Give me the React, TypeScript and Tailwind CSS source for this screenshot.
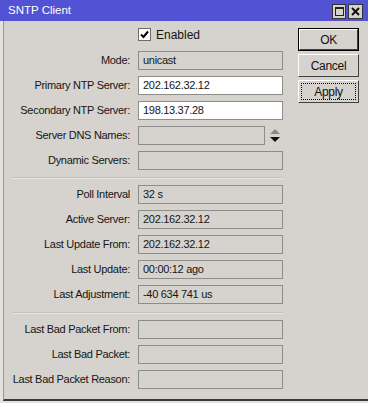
import React from 'react';

const font = { fontFamily: '"Liberation Sans", Arial, sans-serif' };

type Row = { label: string; value?: string; white?: boolean; spin?: boolean };

const topRows: Row[] = [
  { label: 'Mode:', value: 'unicast' },
  { label: 'Primary NTP Server:', value: '202.162.32.12', white: true },
  { label: 'Secondary NTP Server:', value: '198.13.37.28', white: true },
  { label: 'Server DNS Names:', spin: true },
  { label: 'Dynamic Servers:' },
];

const statusRows: Row[] = [
  { label: 'Poll Interval', value: '32 s' },
  { label: 'Active Server:', value: '202.162.32.12' },
  { label: 'Last Update From:', value: '202.162.32.12' },
  { label: 'Last Update:', value: '00:00:12 ago' },
  { label: 'Last Adjustment:', value: '-40 634 741 us' },
];

const badRows: Row[] = [
  { label: 'Last Bad Packet From:' },
  { label: 'Last Bad Packet:' },
  { label: 'Last Bad Packet Reason:' },
];

const Field: React.FC<{ row: Row }> = ({ row }) => (
  <div className="flex items-center h-[19px]">
    <div className="w-[131px] pr-[1px] text-right whitespace-nowrap">{row.label}</div>
    <div
      className={`ml-[7px] h-[19px] border border-[#8e8c88] pl-[4px] flex items-center whitespace-nowrap ${
        row.spin ? 'w-[127px]' : 'w-[145px]'
      } ${row.white ? 'bg-white' : 'bg-[#d6d3ce]'}`}
    >
      {row.value}
    </div>
    {row.spin && (
      <svg width="12" height="14" viewBox="0 0 12 14" className="ml-[4px]">
        <polygon points="6,0 11,5 1,5" fill="#8a8885" />
        <polygon points="1,8 11,8 6,13" fill="#111" />
      </svg>
    )}
  </div>
);

const Separator: React.FC<{ top: string }> = ({ top }) => (
  <div className={`${top} mb-[6px] ml-[12px] w-[271px] border-t border-[#c4c1bb] border-b border-b-[#e8e6e2]`} />
);

const Button: React.FC<{ label: string; kind?: 'default' | 'focus' }> = ({ label, kind }) => (
  <div
    className={`w-[61px] h-[23px] ${
      kind === 'default' ? 'border border-black' : ''
    } flex`}
  >
    <div className="flex-1 border border-t-white border-l-white border-r-[#404040] border-b-[#404040] bg-[#d6d3ce] flex p-[2px]">
      <div
        className={`flex-1 flex items-center justify-center text-[12px] text-[#111] ${
          kind === 'focus' ? 'border border-dotted border-black' : ''
        }`}
      >
        {label}
      </div>
    </div>
  </div>
);

const App: React.FC = () => {
  return (
    <div className="w-[368px] h-[403px] bg-[#e4e2de] flex flex-col text-[11px] tracking-[-0.3px] text-[#151515]" style={font}>
      {/* Title bar */}
      <div className="h-[21px] bg-[#5252d4] flex items-center justify-between pl-[8px] pr-[5px]">
        <span className="text-white text-[11.5px] tracking-normal">SNTP Client</span>
        <div className="flex gap-[2px] mt-[1px]">
          <div className="w-[14px] h-[15px] bg-[#d6d3ce] border border-[#333] flex items-center justify-center">
            <div className="w-[9px] h-[9px] border border-[#222] border-t-2" />
          </div>
          <div className="w-[15px] h-[15px] bg-[#d6d3ce] border border-[#333] flex items-center justify-center">
            <svg width="9" height="9" viewBox="0 0 9 9">
              <path d="M1 1 L8 8 M8 1 L1 8" stroke="#111" strokeWidth="2" />
            </svg>
          </div>
        </div>
      </div>

      {/* Window body */}
      <div className="flex-1 ml-[3px] mb-[2px] border-l border-l-[#9a9892] border-b-2 border-b-[#3a3a3a] bg-[#d6d3ce] flex">
        {/* Form */}
        <div className="w-[292px] -ml-[4px] pt-[7px]">
          <div className="flex items-center h-[13px] ml-[138px]">
            <div className="w-[13px] h-[13px] bg-white border border-[#6e6c68] flex items-center justify-center">
              <svg width="9" height="9" viewBox="0 0 9 9">
                <path d="M1 4.5 L3.5 7 L8 1.5" stroke="#000" strokeWidth="2" fill="none" />
              </svg>
            </div>
            <span className="ml-[5px] text-[12px] tracking-normal">Enabled</span>
          </div>

          <div className="mt-[10px] flex flex-col gap-[6px]">
            {topRows.map((r) => (
              <Field key={r.label} row={r} />
            ))}
          </div>

          <Separator top="mt-[7px]" />

          <div className="flex flex-col gap-[6px]">
            {statusRows.map((r) => (
              <Field key={r.label} row={r} />
            ))}
          </div>

          <Separator top="mt-[8px]" />

          <div className="flex flex-col gap-[6px]">
            {badRows.map((r) => (
              <Field key={r.label} row={r} />
            ))}
          </div>
        </div>

        {/* Buttons */}
        <div className="ml-[6px] pt-[7px] flex flex-col gap-[3px]">
          <Button label="OK" kind="default" />
          <Button label="Cancel" />
          <Button label="Apply" kind="focus" />
        </div>
      </div>
    </div>
  );
};

export default App;
